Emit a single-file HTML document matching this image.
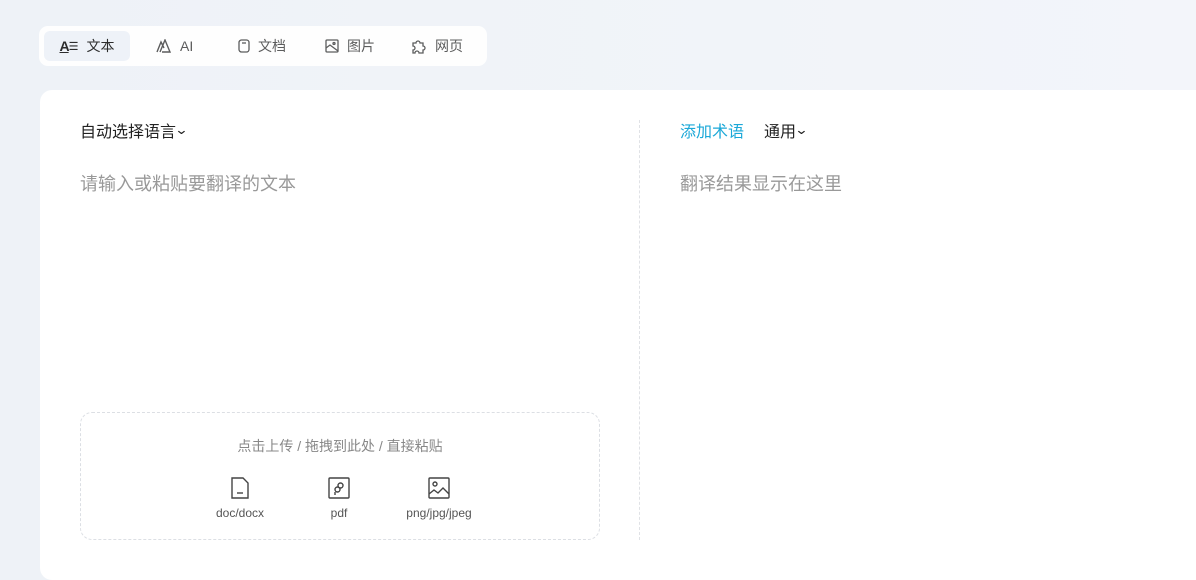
<!DOCTYPE html>
<html><head><meta charset="utf-8"><style>
body{margin:0;width:1196px;height:567px;overflow:hidden;background:linear-gradient(90deg,#eef2f7,#f3f5fa);font-family:"Liberation Sans","Noto Sans CJK SC",sans-serif;position:relative}
.tabs{position:absolute;left:39px;top:26px;width:448px;height:40px;background:#fff;border-radius:9px;opacity:.95}
.tab{position:absolute;top:5px;height:30px;display:flex;align-items:center;font-size:14px;color:#555;gap:8px}
.tab.act{background:#eef3f9;border-radius:6px;color:#222}
svg{display:block}
.panel{position:absolute;left:40px;top:90px;width:1170px;height:490px;background:#fff;border-radius:12px}
.t{position:absolute;font-size:16px;line-height:20px}
.ch{font-size:13px;display:inline-block;transform:scaleX(1.3) translateY(-3px)}
.up{position:absolute;left:40px;top:322px;width:518px;height:126px;border:1px dashed #dcdfe4;border-radius:12px}
.f{position:absolute;top:64px;text-align:center;font-size:12px;color:#555;width:80px}
.f svg{margin:0 auto 7px}
</style></head><body>
<div class="tabs">
 <div class="tab act" style="left:5px;width:86px;justify-content:center"><span style="font-size:14px;font-weight:bold;letter-spacing:-1px;text-decoration:underline">A</span><span style="font-size:11px;margin-left:-8px">☰</span>文本</div>
 <div class="tab" style="left:117px"><svg width="16" height="14" viewBox="0 0 16 14" fill="none" stroke="#555" stroke-width="1.4"><path d="M1 13L5 3l3 6M4 13l5-12 5 12H6"/></svg>AI</div>
 <div class="tab" style="left:199px"><svg width="12" height="14" fill="none" stroke="#555" stroke-width="1.3"><rect x="1" y="1" width="10" height="12" rx="2.5"/><path d="M4 4h4"/></svg>文档</div>
 <div class="tab" style="left:286px"><svg width="14" height="14" fill="none" stroke="#555" stroke-width="1.3"><rect x="1" y="1" width="12" height="12" rx="1"/><path d="M1 9l4-3 8 6"/><circle cx="9" cy="4.5" r="1"/></svg>图片</div>
 <div class="tab" style="left:372px"><svg width="16" height="15" fill="none" stroke="#555" stroke-width="1.3"><path d="M2 4h3a2 2 0 1 1 4 0h3v3a2 2 0 1 1 0 4v3H8a2 2 0 1 0-4 0H2v-3a2 2 0 1 0 0-4z"/></svg>网页</div>
</div>
<div class="panel">
 <div class="t" style="left:40px;top:33px;color:#222">自动选择语言<span class="ch">⌄</span></div>
 <div class="t" style="left:40px;top:84px;font-size:18px;color:#999">请输入或粘贴要翻译的文本</div>
 <div style="position:absolute;left:599px;top:30px;height:420px;border-left:1px dashed #e0e2e6"></div>
 <div class="t" style="left:640px;top:33px;color:#1ba8d8">添加术语</div>
 <div class="t" style="left:724px;top:33px;color:#222">通用<span class="ch">⌄</span></div>
 <div class="t" style="left:640px;top:84px;font-size:18px;color:#999">翻译结果显示在这里</div>
 <div class="up">
  <div style="position:absolute;top:23px;width:100%;text-align:center;font-size:14px;color:#888">点击上传 / 拖拽到此处 / 直接粘贴</div>
  <div class="f" style="left:119px"><svg width="18" height="22" fill="none" stroke="#444" stroke-width="1.4"><path d="M1 1h11l5 5v15H1z"/><path d="M6 16h6"/></svg>doc/docx</div>
  <div class="f" style="left:218px"><svg width="22" height="22" fill="none" stroke="#444" stroke-width="1.4"><rect x="1" y="1" width="20" height="20" rx="1"/><circle cx="12.5" cy="8.5" r="2.5"/><circle cx="9.5" cy="12.5" r="2.5"/><path d="M7 15v3"/></svg>pdf</div>
  <div class="f" style="left:318px"><svg width="22" height="22" fill="none" stroke="#444" stroke-width="1.4"><rect x="1" y="1" width="20" height="20" rx="1"/><circle cx="7" cy="7" r="2"/><path d="M1 17l5-4 4 3 5-5 6 6"/></svg>png/jpg/jpeg</div>
 </div>
</div>
</body></html>
